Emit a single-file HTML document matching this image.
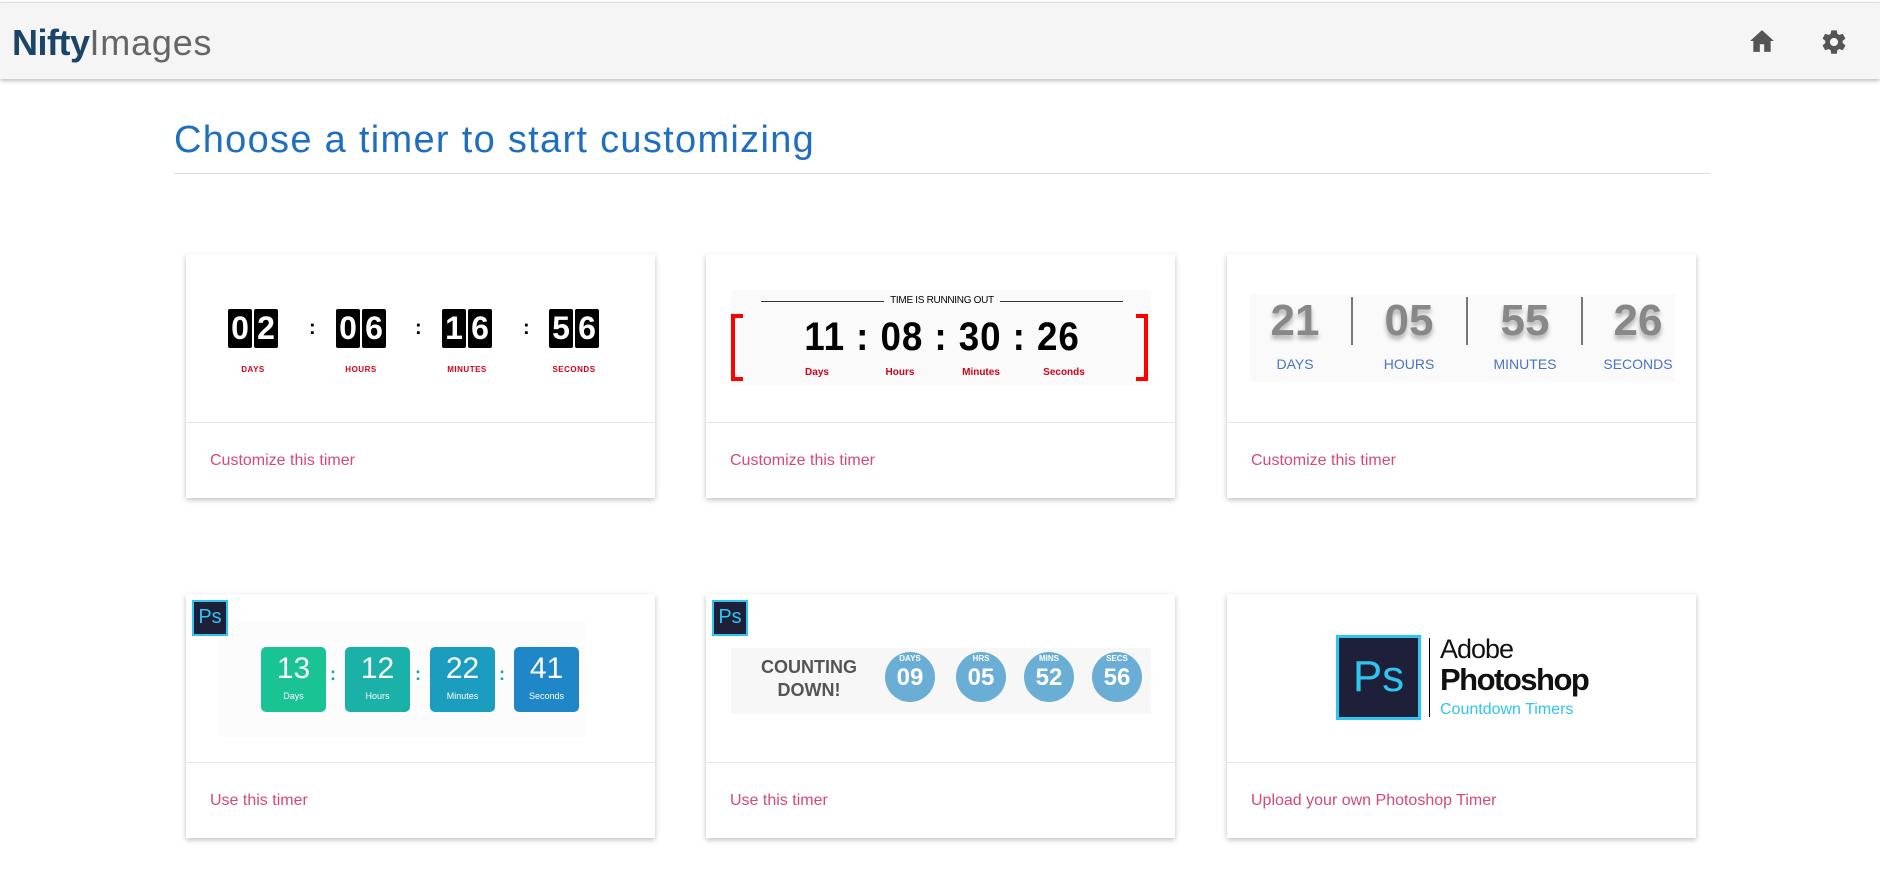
<!DOCTYPE html>
<html><head><meta charset="utf-8"><style>
*{box-sizing:border-box;margin:0;padding:0}
body{width:1880px;height:892px;background:#fff;font-family:"Liberation Sans",sans-serif;position:relative;overflow:hidden}
.hdr{position:absolute;left:0;top:2px;width:1880px;height:77px;background:#f5f5f5;box-shadow:0 2px 4px rgba(0,0,0,.25);border-top:1px solid #ddd}
.logo{position:absolute;left:12px;top:19px;font-size:36px;letter-spacing:0.8px}
.logo b{color:#1b4566;font-weight:700;letter-spacing:-0.5px}.logo span{color:#666;font-weight:400}
h1{position:absolute;left:174px;top:119px;font-size:38px;font-weight:400;color:#1f6fc0;letter-spacing:1.3px}
.rule{position:absolute;left:174px;top:173px;width:1536px;height:1px;background:#ddd}
.card{position:absolute;width:469px;height:244px;background:#fff;box-shadow:0 2px 5px rgba(0,0,0,.25);overflow:hidden}
.card .div{position:absolute;left:0;top:168px;width:100%;height:1px;background:#e6e6e6}
.card .lk{position:absolute;left:24px;top:198px;font-size:16px;color:#d4487b}
.a{position:absolute}
.dg{position:absolute;top:55px;height:39px;width:24px;background:#000;color:#fff;font:700 32px/39px "Liberation Sans",sans-serif;text-align:center;border-radius:2px}
.rl{position:absolute;top:111px;font:700 8px "Liberation Sans",sans-serif;color:#d0021b;width:80px;text-align:center;letter-spacing:.5px}
.ps{position:absolute;left:6px;top:6px;width:36px;height:36px;background:#1e1f38;border:2px solid #2ec5f0;color:#2ec5f0;font:400 20px/30px "Liberation Sans",sans-serif;text-align:center}
</style></head><body>
<div class="hdr">
<div class="logo"><b>Nifty</b><span>Images</span></div>
<svg class="a" style="left:1749px;top:26px" width="26" height="24" viewBox="0 0 24 22"><path d="M12 1L1 11h3v10h6v-7h4v7h6V11h3z" fill="#555"/></svg>
<svg class="a" style="left:1820px;top:25px" width="28" height="28" viewBox="0 0 24 24"><path fill="#555" d="M19.4 13c.04-.33.06-.66.06-1s-.02-.67-.06-1l2.1-1.650c.2-.15.25-.42.12-.64l-2-3.46c-.12-.22-.39-.3-.61-.22l-2.49 1c-.52-.4-1.08-.73-1.690-.98l-.38-2.650A.49.49 0 0 0 14 2h-4c-.25 0-.46.18-.49.42l-.38 2.650c-.61.25-1.170.59-1.690.98l-2.490-1c-.23-.09-.49 0-.61.22l-2 3.46c-.13.22-.07.49.12.64L4.570 11c-.04.33-.07.67-.07 1s.03.67.07 1l-2.110 1.650c-.19.15-.24.42-.12.64l2 3.46c.12.22.39.3.61.22l2.490-1c.52.4 1.080.73 1.690.98l.38 2.650c.03.24.24.42.49.42h4c.25 0 .46-.18.49-.42l.38-2.650c.61-.25 1.170-.59 1.690-.98l2.490 1c.23.09.49 0 .61-.22l2-3.46c.12-.22.07-.49-.12-.64L19.4 13zM12 15.5a3.5 3.5 0 1 1 0-7 3.5 3.5 0 0 1 0 7z"/></svg>
</div>
<h1>Choose a timer to start customizing</h1>
<div class="rule"></div>

<div class="card" style="left:186px;top:254px">
<div class="dg" style="left:42px">0</div><div class="dg" style="left:68px">2</div>
<div class="dg" style="left:150px">0</div><div class="dg" style="left:176px">6</div>
<div class="dg" style="left:256px">1</div><div class="dg" style="left:282px">6</div>
<div class="dg" style="left:363px">5</div><div class="dg" style="left:389px">6</div>
<div class="a" style="left:123px;top:63px;font:700 20px sans-serif">:</div>
<div class="a" style="left:229px;top:63px;font:700 20px sans-serif">:</div>
<div class="a" style="left:337px;top:63px;font:700 20px sans-serif">:</div>
<div class="rl" style="left:27px">DAYS</div><div class="rl" style="left:135px">HOURS</div><div class="rl" style="left:241px">MINUTES</div><div class="rl" style="left:348px">SECONDS</div>
<div class="div"></div><div class="lk">Customize this timer</div></div>

<div class="card" style="left:706px;top:254px">
<div class="a" style="left:25px;top:36px;width:420px;height:96px;background:#fafafa"></div>
<div class="a" style="left:55px;top:47px;width:362px;height:1px;background:#333"></div>
<div class="a" style="left:178px;top:40px;width:116px;text-align:center;background:#fafafa;font:400 10px/14px sans-serif;color:#000;letter-spacing:-0.3px">TIME IS RUNNING OUT</div>
<div class="a" style="left:25px;top:60px;width:12px;height:67px;border:4px solid #f00;border-right:none"></div>
<div class="a" style="left:430px;top:60px;width:12px;height:67px;border:4px solid #f00;border-left:none"></div>
<div class="a" style="left:76px;top:59px;width:320px;font:700 40px/48px 'Liberation Sans Narrow','Liberation Sans',sans-serif;color:#000;text-align:center;letter-spacing:1px;transform:scaleX(.92)">11 : 08 : 30 : 26</div>
<div class="a" style="left:86px;top:113px;width:300px;font:700 10px sans-serif;color:#d0021b"><span class="a" style="left:0;width:50px;text-align:center">Days</span><span class="a" style="left:83px;width:50px;text-align:center">Hours</span><span class="a" style="left:164px;width:50px;text-align:center">Minutes</span><span class="a" style="left:247px;width:50px;text-align:center">Seconds</span></div>
<div class="div"></div><div class="lk">Customize this timer</div></div>

<div class="card" style="left:1227px;top:254px">
<div class="a" style="left:23px;top:40px;width:425px;height:88px;background:#fafafa"></div>
<div class="a" style="left:28px;top:40px;width:80px;text-align:center;font:700 44px/54px sans-serif;color:#888;text-shadow:0 4px 5px rgba(0,0,0,.3)">21</div>
<div class="a" style="left:142px;top:40px;width:80px;text-align:center;font:700 44px/54px sans-serif;color:#888;text-shadow:0 4px 5px rgba(0,0,0,.3)">05</div>
<div class="a" style="left:258px;top:40px;width:80px;text-align:center;font:700 44px/54px sans-serif;color:#888;text-shadow:0 4px 5px rgba(0,0,0,.3)">55</div>
<div class="a" style="left:371px;top:40px;width:80px;text-align:center;font:700 44px/54px sans-serif;color:#888;text-shadow:0 4px 5px rgba(0,0,0,.3)">26</div>
<div class="a" style="left:124px;top:43px;width:2px;height:48px;background:#777"></div>
<div class="a" style="left:239px;top:43px;width:2px;height:48px;background:#777"></div>
<div class="a" style="left:354px;top:43px;width:2px;height:48px;background:#777"></div>
<div class="a" style="left:28px;top:102px;width:80px;text-align:center;font:400 14px sans-serif;color:#4a74c4">DAYS</div>
<div class="a" style="left:142px;top:102px;width:80px;text-align:center;font:400 14px sans-serif;color:#4a74c4">HOURS</div>
<div class="a" style="left:258px;top:102px;width:80px;text-align:center;font:400 14px sans-serif;color:#4a74c4">MINUTES</div>
<div class="a" style="left:371px;top:102px;width:80px;text-align:center;font:400 14px sans-serif;color:#4a74c4">SECONDS</div>
<div class="div"></div><div class="lk">Customize this timer</div></div>

<div class="card" style="left:186px;top:594px">
<div class="a" style="left:33px;top:27px;width:367px;height:116px;background:#fcfcfc"></div>
<div class="ps">Ps</div>
<div class="a" style="left:75px;top:53px;width:65px;height:65px;border-radius:5px;background:#19c394;color:#fff;text-align:center;font:300 30px/44px sans-serif">13<div style="font-size:9px;line-height:10px">Days</div></div>
<div class="a" style="left:159px;top:53px;width:65px;height:65px;border-radius:5px;background:#1bb0a8;color:#fff;text-align:center;font:300 30px/44px sans-serif">12<div style="font-size:9px;line-height:10px">Hours</div></div>
<div class="a" style="left:244px;top:53px;width:65px;height:65px;border-radius:5px;background:#1a9dbf;color:#fff;text-align:center;font:300 30px/44px sans-serif">22<div style="font-size:9px;line-height:10px">Minutes</div></div>
<div class="a" style="left:328px;top:53px;width:65px;height:65px;border-radius:5px;background:#1f87c8;color:#fff;text-align:center;font:300 30px/44px sans-serif">41<div style="font-size:9px;line-height:10px">Seconds</div></div>
<div class="a" style="left:144px;top:70px;color:#1aa;font:700 18px sans-serif">:</div>
<div class="a" style="left:229px;top:70px;color:#1aa;font:700 18px sans-serif">:</div>
<div class="a" style="left:313px;top:70px;color:#1aa;font:700 18px sans-serif">:</div>
<div class="div"></div><div class="lk">Use this timer</div></div>

<div class="card" style="left:706px;top:594px">
<div class="a" style="left:25px;top:54px;width:420px;height:66px;background:#f7f7f7"></div>
<div class="ps">Ps</div>
<div class="a" style="left:43px;top:62px;width:120px;text-align:center;font:700 18px/23px sans-serif;color:#555">COUNTING<br>DOWN!</div>
<div class="a" style="left:179px;top:58px;width:50px;height:50px;border-radius:50%;background:#6aaed6;color:#fff;text-align:center;font:700 8px/14px sans-serif">DAYS<div style="font-size:24px;line-height:24px">09</div></div>
<div class="a" style="left:250px;top:58px;width:50px;height:50px;border-radius:50%;background:#6aaed6;color:#fff;text-align:center;font:700 8px/14px sans-serif">HRS<div style="font-size:24px;line-height:24px">05</div></div>
<div class="a" style="left:318px;top:58px;width:50px;height:50px;border-radius:50%;background:#6aaed6;color:#fff;text-align:center;font:700 8px/14px sans-serif">MINS<div style="font-size:24px;line-height:24px">52</div></div>
<div class="a" style="left:386px;top:58px;width:50px;height:50px;border-radius:50%;background:#6aaed6;color:#fff;text-align:center;font:700 8px/14px sans-serif">SECS<div style="font-size:24px;line-height:24px">56</div></div>
<div class="div"></div><div class="lk">Use this timer</div></div>

<div class="card" style="left:1227px;top:594px">
<div class="a" style="left:109px;top:41px;width:85px;height:85px;background:#1e1f38;border:3px solid #2ec5f0;color:#2ec5f0;font:400 44px/78px sans-serif;text-align:center">Ps</div>
<div class="a" style="left:202px;top:44px;width:1px;height:79px;background:#000"></div>
<div class="a" style="left:213px;top:40px;font:400 27px sans-serif;color:#111;letter-spacing:-1px">Adobe</div>
<div class="a" style="left:213px;top:68px;font:700 31px sans-serif;color:#111;letter-spacing:-1.5px">Photoshop</div>
<div class="a" style="left:213px;top:107px;font:400 16px sans-serif;color:#2ec5f0">Countdown Timers</div>
<div class="div"></div><div class="lk">Upload your own Photoshop Timer</div></div>
</body></html>
